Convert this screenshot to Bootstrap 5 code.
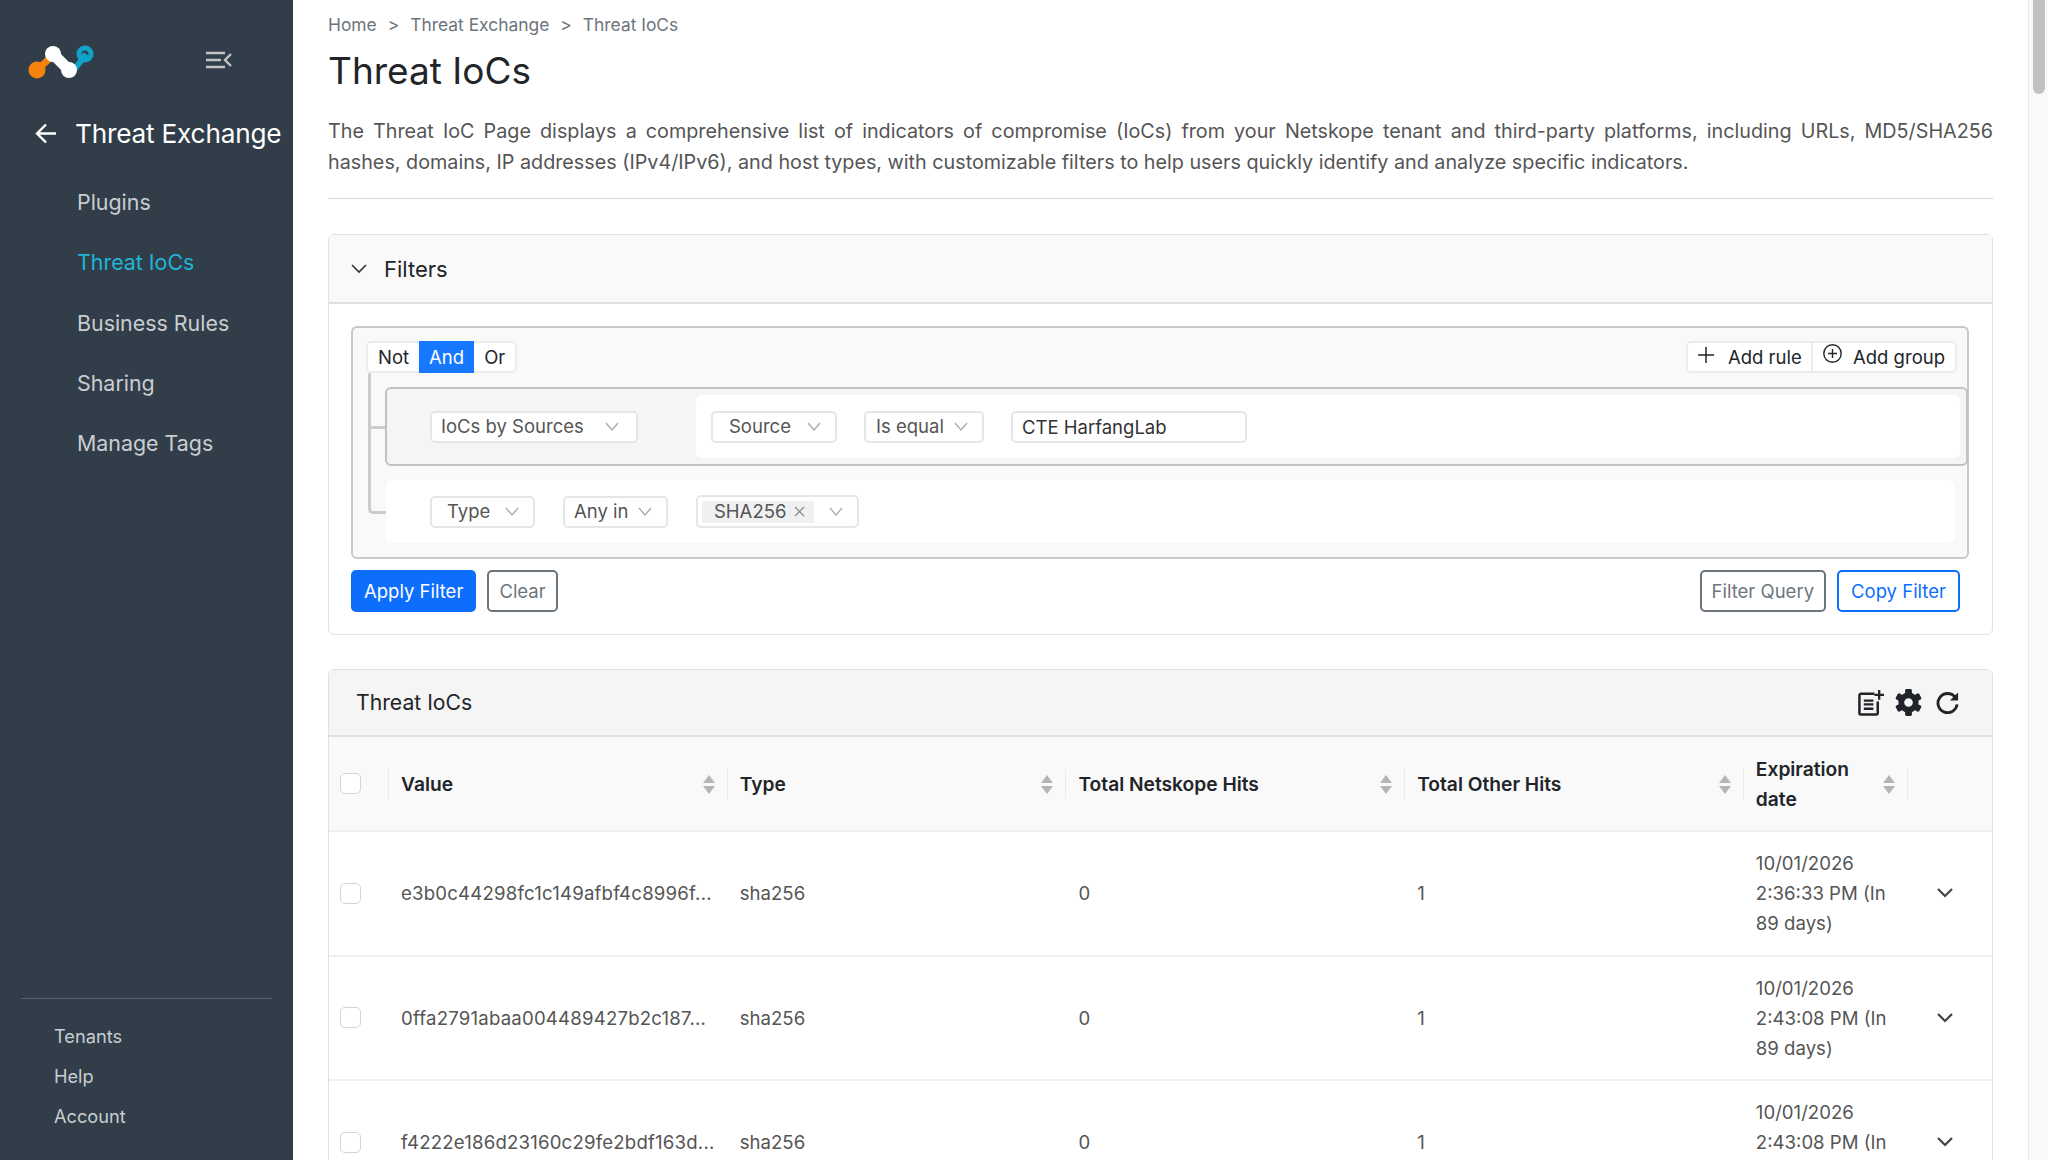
<!DOCTYPE html>
<html lang="en">
<head>
  <meta charset="UTF-8" />
  <title>Threat IoCs</title>
  <link href="https://cdn.jsdelivr.net/npm/bootstrap@5.3.3/dist/css/bootstrap.min.css" rel="stylesheet" />
  <style>
    body { font-family: Inter, "Liberation Sans", sans-serif; font-size: 18px; color: #555; height: 100vh; overflow: hidden; background: #fff; }
    .app-shell { height: 100vh; }

    /* sidebar */
    .side-bar { width: 293px; flex: none; background: #313e49; color: #c9cdd1; }
    .side-top { padding: 45px 0 0 28px; height: 102px; }
    .side-toggle { margin-left: 110px; margin-top: 6px; }
    .side-title { padding-left: 35px; height: 63px; color: #fff; font-size: 26.200px; letter-spacing: -.2px; white-space: nowrap; }
    .side-title svg { margin-right: 19px; }
    .side-menu { padding: 7px 0 0 77px; }
    .side-menu a { display: block; height: 60.300px; line-height: 60.300px; font-size: 21.400px; color: #c9cdd1; text-decoration: none; }
    .side-menu a.is-current { color: #1fb5d8; }
    .side-foot { margin: auto 21px 0; border-top: 1px solid #55616b; padding: 17px 0 24px 33px; }
    .side-foot a { display: block; height: 40px; line-height: 40px; font-size: 18.200px; color: #c9cdd1; text-decoration: none; }

    /* main */
    .main-pane { min-width: 0; padding: 12px 35px 0; overflow: hidden; }
    .crumbs { --bs-breadcrumb-divider: '>'; --bs-breadcrumb-margin-bottom: 0; --bs-breadcrumb-item-padding-x: 11px; font-size: 17.400px; line-height: 26px; }
    .crumbs .breadcrumb-item, .crumbs .breadcrumb-item::before { color: #6c757d; }
    .page-title { font-size: 37px; font-weight: 400; line-height: 46px; margin: 10px 0 0; color: #212529; }
    .page-desc { margin: 22px 0 0; font-size: 19.750px; line-height: 30.600px; text-align: justify; color: #555; }
    .page-rule { margin: 21px 0 35px; border-color: #d6d6d6; opacity: 1; }

    .pane-card { --bs-card-border-color: #e0e0e0; --bs-card-border-radius: 6px; --bs-card-inner-border-radius: 5px; }
    .filter-card { margin-bottom: 34px; }
    .filter-head { height: 69px; padding: 1px 23px 0 22px; background: #f9f9f9; border-bottom: 2px solid #e0e0e0; color: #212529; font-size: 22px; gap: 17px; }
    .filter-body { padding: 22px 23px 22px 22px; }

    /* query builder */
    .query-box { position: relative; height: 233px; background: #f9f9f9; border: 2px solid #c8c8c8; border-radius: 6px; padding: 13px 0 0; }
    .query-top { padding: 0 10px 0 13px; height: 32px; }
    .link-tree { position: absolute; left: 15px; top: 45px; width: 18px; height: 141px; border-left: 3px solid #ccc; border-bottom: 3px solid #ccc; border-bottom-left-radius: 5px; }
    .link-tree::before { content: ""; position: absolute; left: 0; right: 0; top: 53px; border-top: 3px solid #ccc; }
    .seg-group { background: #fff; border: 2px solid #ececec; border-radius: 5px; height: 32px; font-size: 18.500px; color: #212529; }
    .seg-item { padding: 0 10px; line-height: 28px; white-space: nowrap; }
    .seg-item.is-on { background: #1677ff; color: #fff; margin: -2px 0; line-height: 32px; padding: 0 10px; }
    .seg-add { padding: 0 9px 0 10px; }
    .seg-add svg { vertical-align: 1px; margin-right: 9px; }
    .seg-split { border-left: 2px solid #ececec; padding-right: 10px; }
    .seg-split svg { margin-right: 6px; }
    .rule-group { position: relative; height: 79px; margin: 14px -1px 0 32px; background: #f5f5f5; border: 2px solid #c2c2c2; border-radius: 6px; padding: 7px 6px 7px 0; }
    .rule-group > .rule-pick { margin-left: 43px; }
    .rule-fields { height: 63px; margin-left: 58px; padding-left: 15px; background: #fff; border-radius: 6px; gap: 27px; }
    .rule-plain { height: 63px; margin: 14px 12px 0 33px; padding-left: 44px; background: #fff; border-radius: 6px; gap: 28px; }
    .rule-pick { height: 32px; padding: 0 14px 0 10px; background: #fff; border: 2px solid #e6e6e6; border-radius: 5px; font-size: 18.500px; color: #555; white-space: nowrap; justify-content: space-between; }
    .pick-source { width: 126px; padding-left: 16px; }
    .pick-kind { width: 208px; padding-left: 9px; padding-right: 17px; }
    .pick-op { width: 120px; }
    .pick-type { width: 105px; padding-left: 15px; }
    .pick-any { width: 105px; padding-left: 9px; }
    .pick-tags { width: 163px; height: 33px; padding: 0 14px 0 4px; }
    .tag-chip { height: 22px; width: 112px; padding: 0 9px 0 12px; background: #f0f0f0; border-radius: 2px; justify-content: space-between; }
    .pick-input { width: 236px; height: 32px; padding: 0 9px; font-size: 18.500px; color: #333; border: 2px solid #e6e6e6; border-radius: 5px; }
    .act-row { margin-top: 11px; padding-right: 9px; }
    .act-gap { gap: 11px; }
    .act-btn { height: 42px; padding: 0 10px; font-size: 18.500px; line-height: 38px; border-width: 2px; border-radius: 5px; }
    .act-btn.btn-primary { padding: 0 11px; --bs-btn-bg: #0d6efd; }
    .act-btn.btn-outline-primary { padding: 0 12px; }

    /* table card */
    .ioc-head { height: 67px; padding: 0 33px 0 27px; background: #f5f5f5; border-bottom: 2px solid #e0e0e0; color: #212529; font-size: 21.200px; }
    .ioc-tools { gap: 11px; }
    .tool-refresh { margin-left: 3px; }
    .ioc-table { table-layout: fixed; margin: 0; font-size: 18.600px; line-height: 30px; --bs-table-color: #555; }
    .ioc-table th { position: relative; height: 94px; padding: 0 12px; background: #f9f9f9; color: #212529; font-size: 19.200px; font-weight: 600; vertical-align: middle; border-bottom: 2px solid #efefef; }
    .ioc-table td { height: 124.500px; padding: 16px 12px; vertical-align: middle; border-bottom: 2px solid #efefef; }
    .ioc-table th:not(:last-child)::after { content: ""; position: absolute; right: 0; top: 32px; height: 30px; border-right: 1px solid #eaeaea; }
    .col-check { width: 60px; }
    .col-main { width: 338.500px; }
    .col-exp { width: 164px; }
    .col-act { width: 84px; }
    .cell-check { padding-left: 11px !important; }
    .cell-check .form-check-input { width: 21px; height: 21px; margin: 0; display: block; border: 1px solid #d4d4d4; border-radius: 5px; }
    .cell-cut { white-space: nowrap; letter-spacing: .2px; }
    .cell-act { padding-left: 29px !important; }
    .cell-act svg { display: block; }
    .sort-mark { position: absolute; right: 13px; top: 38px; }
    .head-line { padding-right: 34px; }

    /* scrollbar strip */
    .scroll-rail { width: 20px; flex: none; background: #fafafa; border-left: 1px solid #e8e8e8; padding: 0 3px 0 4px; }
    .scroll-thumb { height: 94px; background: #c1c1c1; border-radius: 0 0 6px 6px; }
  </style>
</head>
<body>
<div class="app-shell d-flex">

  <!-- Sidebar -->
  <aside class="side-bar d-flex flex-column">
    <div class="side-top d-flex align-items-start">
      <svg width="68" height="35" viewBox="0 0 68 35">
        <path d="M8 26 L22 13" stroke="#f5820a" stroke-width="7" />
        <circle cx="9" cy="25" r="8.500" fill="#f5820a" />
        <path d="M46 25 L58 9" stroke="#0fa3c9" stroke-width="6" />
        <circle cx="57" cy="9" r="6" fill="none" stroke="#0fa3c9" stroke-width="5" />
        <path d="M25 9 L41 25" stroke="#fff" stroke-width="11" />
        <circle cx="25" cy="9" r="8" fill="#fff" />
        <circle cx="41" cy="25" r="8" fill="#fff" />
      </svg>
      <svg class="side-toggle" width="26" height="18" viewBox="0 0 26 18" fill="none" stroke="#c4c4c4" stroke-width="2.400">
        <path d="M0 2h19M0 9h15M0 16h19" /><path d="M25 3l-6 6 6 6" />
      </svg>
    </div>
    <div class="side-title d-flex align-items-center">
      <svg width="21" height="21" viewBox="0 0 21 21" fill="none" stroke="#fff" stroke-width="2.400"><path d="M21 10.500H2M11 1.500l-9 9 9 9" /></svg>
      Threat Exchange
    </div>
    <nav class="side-menu">
      <a href="#">Plugins</a>
      <a href="#" class="is-current">Threat IoCs</a>
      <a href="#">Business Rules</a>
      <a href="#">Sharing</a>
      <a href="#">Manage Tags</a>
    </nav>
    <div class="side-foot">
      <a href="#">Tenants</a>
      <a href="#">Help</a>
      <a href="#">Account</a>
    </div>
  </aside>

  <!-- Main -->
  <main class="main-pane flex-grow-1">
    <nav>
      <ol class="breadcrumb crumbs">
        <li class="breadcrumb-item">Home</li>
        <li class="breadcrumb-item">Threat Exchange</li>
        <li class="breadcrumb-item">Threat IoCs</li>
      </ol>
    </nav>
    <h1 class="page-title">Threat IoCs</h1>
    <p class="page-desc">The Threat IoC Page displays a comprehensive list of indicators of compromise (IoCs) from your Netskope tenant and third-party platforms, including URLs, MD5/SHA256 hashes, domains, IP addresses (IPv4/IPv6), and host types, with customizable filters to help users quickly identify and analyze specific indicators.</p>
    <hr class="page-rule" />

    <!-- Filters -->
    <div class="card pane-card filter-card">
      <div class="filter-head d-flex align-items-center">
        <svg width="16" height="10" viewBox="0 0 16 10" fill="none" stroke="#333" stroke-width="1.600"><path d="M1 1l7 7 7-7" /></svg>
        Filters
      </div>
      <div class="filter-body">
        <div class="query-box">
          <div class="link-tree"></div>
          <div class="query-top d-flex justify-content-between">
            <div class="seg-group d-flex">
              <span class="seg-item">Not</span><span class="seg-item is-on">And</span><span class="seg-item">Or</span>
            </div>
            <div class="seg-group d-flex">
              <span class="seg-item seg-add">
                <svg width="16" height="16" viewBox="0 0 16 16" fill="none" stroke="#212529" stroke-width="1.500"><path d="M8 0v16M0 8h16" /></svg>
                Add rule
              </span>
              <span class="seg-item seg-add seg-split">
                <svg width="19" height="19" viewBox="0 0 19 19" fill="none" stroke="#212529" stroke-width="1.400"><circle cx="9.500" cy="9.500" r="8.700" /><path d="M9.500 5v9M5 9.500h9" /></svg>
                Add group
              </span>
            </div>
          </div>
          <div class="rule-group d-flex align-items-center">
            <div class="rule-pick pick-kind d-flex align-items-center">IoCs by Sources <svg width="14" height="9" viewBox="0 0 14 9" fill="none" stroke="#aaa" stroke-width="1.300"><path d="M1 1l6 7 6-7" /></svg></div>
            <div class="rule-fields flex-grow-1 d-flex align-items-center">
              <div class="rule-pick pick-source d-flex align-items-center">Source <svg width="14" height="9" viewBox="0 0 14 9" fill="none" stroke="#aaa" stroke-width="1.300"><path d="M1 1l6 7 6-7" /></svg></div>
              <div class="rule-pick pick-op d-flex align-items-center">Is equal <svg width="14" height="9" viewBox="0 0 14 9" fill="none" stroke="#aaa" stroke-width="1.300"><path d="M1 1l6 7 6-7" /></svg></div>
              <input class="form-control pick-input" value="CTE HarfangLab" />
            </div>
          </div>
          <div class="rule-plain d-flex align-items-center">
            <div class="rule-pick pick-type d-flex align-items-center">Type <svg width="14" height="9" viewBox="0 0 14 9" fill="none" stroke="#aaa" stroke-width="1.300"><path d="M1 1l6 7 6-7" /></svg></div>
            <div class="rule-pick pick-any d-flex align-items-center">Any in <svg width="14" height="9" viewBox="0 0 14 9" fill="none" stroke="#aaa" stroke-width="1.300"><path d="M1 1l6 7 6-7" /></svg></div>
            <div class="rule-pick pick-tags d-flex align-items-center">
              <span class="tag-chip d-flex align-items-center">SHA256 <svg width="11" height="11" viewBox="0 0 11 11" fill="none" stroke="#888" stroke-width="1.200"><path d="M1 1l9 9M10 1l-9 9" /></svg></span>
              <svg width="14" height="9" viewBox="0 0 14 9" fill="none" stroke="#aaa" stroke-width="1.300"><path d="M1 1l6 7 6-7" /></svg>
            </div>
          </div>
        </div>
        <div class="act-row d-flex justify-content-between">
          <div class="d-flex act-gap">
            <button class="btn btn-primary act-btn">Apply Filter</button>
            <button class="btn btn-outline-secondary act-btn">Clear</button>
          </div>
          <div class="d-flex act-gap">
            <button class="btn btn-outline-secondary act-btn">Filter Query</button>
            <button class="btn btn-outline-primary act-btn">Copy Filter</button>
          </div>
        </div>
      </div>
    </div>

    <!-- Threat IoCs table -->
    <div class="card pane-card">
      <div class="ioc-head d-flex align-items-center justify-content-between">
        Threat IoCs
        <div class="ioc-tools d-flex align-items-center">
          <svg width="26" height="26" viewBox="0 0 27 27" fill="none" stroke="#212529">
            <path d="M17 4H3a1.500 1.500 0 0 0-1.500 1.500V24A1.500 1.500 0 0 0 3 25.500h16a1.500 1.500 0 0 0 1.500-1.500V12" stroke-width="2.600" />
            <path d="M6 11h10M6 15h10M6 19.500h10" stroke-width="2.400" />
            <path d="M22 0v10M17 5h10" stroke-width="2.400" />
          </svg>
          <svg width="27" height="27" viewBox="0 0 28 28" fill="#212529">
            <circle cx="14" cy="14" r="7.500" fill="none" stroke="#212529" stroke-width="6" />
            <g><rect x="10.500" y="0" width="7" height="6" rx="1.500" /><rect x="10.500" y="22" width="7" height="6" rx="1.500" /></g>
            <g transform="rotate(60 14 14)"><rect x="10.500" y="0" width="7" height="6" rx="1.500" /><rect x="10.500" y="22" width="7" height="6" rx="1.500" /></g>
            <g transform="rotate(120 14 14)"><rect x="10.500" y="0" width="7" height="6" rx="1.500" /><rect x="10.500" y="22" width="7" height="6" rx="1.500" /></g>
          </svg>
          <svg class="tool-refresh" width="23" height="23" viewBox="0 0 24 24" fill="none" stroke="#212529" stroke-width="3">
            <path d="M20 6.500A10 10 0 1 0 22 14" />
            <path d="M23 1.500V10h-8.500z" fill="#212529" stroke="none" />
          </svg>
        </div>
      </div>
      <table class="table ioc-table">
        <colgroup><col class="col-check" /><col class="col-main" /><col class="col-main" /><col class="col-main" /><col class="col-main" /><col class="col-exp" /><col class="col-act" /></colgroup>
        <thead>
          <tr>
            <th class="cell-check"><input class="form-check-input" type="checkbox" /></th>
            <th>Value<svg class="sort-mark" width="12" height="19" viewBox="0 0 12 19" fill="#b5b5b5"><path d="M6 0l6 8H0zM6 19l6-8H0z" /></svg></th>
            <th>Type<svg class="sort-mark" width="12" height="19" viewBox="0 0 12 19" fill="#b5b5b5"><path d="M6 0l6 8H0zM6 19l6-8H0z" /></svg></th>
            <th>Total Netskope Hits<svg class="sort-mark" width="12" height="19" viewBox="0 0 12 19" fill="#b5b5b5"><path d="M6 0l6 8H0zM6 19l6-8H0z" /></svg></th>
            <th>Total Other Hits<svg class="sort-mark" width="12" height="19" viewBox="0 0 12 19" fill="#b5b5b5"><path d="M6 0l6 8H0zM6 19l6-8H0z" /></svg></th>
            <th><div class="head-line">Expiration date</div><svg class="sort-mark" width="12" height="19" viewBox="0 0 12 19" fill="#b5b5b5"><path d="M6 0l6 8H0zM6 19l6-8H0z" /></svg></th>
            <th></th>
          </tr>
        </thead>
        <tbody id="iocRows"></tbody>
      </table>
    </div>
  </main>

  <div class="scroll-rail"><div class="scroll-thumb"></div></div>
</div>

<script>
  const rows = [
    { value: "e3b0c44298fc1c149afbf4c8996f...", date: "10/01/2026 2:36:33 PM (In 89 days)" },
    { value: "0ffa2791abaa004489427b2c187...", date: "10/01/2026 2:43:08 PM (In 89 days)" },
    { value: "f4222e186d23160c29fe2bdf163d...", date: "10/01/2026 2:43:08 PM (In 89 days)" }
  ];
  document.getElementById("iocRows").innerHTML = rows.map(r => `
    <tr>
      <td class="cell-check"><input class="form-check-input" type="checkbox" /></td>
      <td class="cell-cut">${r.value}</td>
      <td>sha256</td>
      <td>0</td>
      <td>1</td>
      <td>${r.date}</td>
      <td class="cell-act"><svg width="16" height="10" viewBox="0 0 16 10" fill="none" stroke="#444" stroke-width="2.200"><path d="M1 1l7 7 7-7" /></svg></td>
    </tr>`).join("");
</script>
<script src="https://cdn.jsdelivr.net/npm/bootstrap@5.3.3/dist/js/bootstrap.bundle.min.js"></script>
</body>
</html>
